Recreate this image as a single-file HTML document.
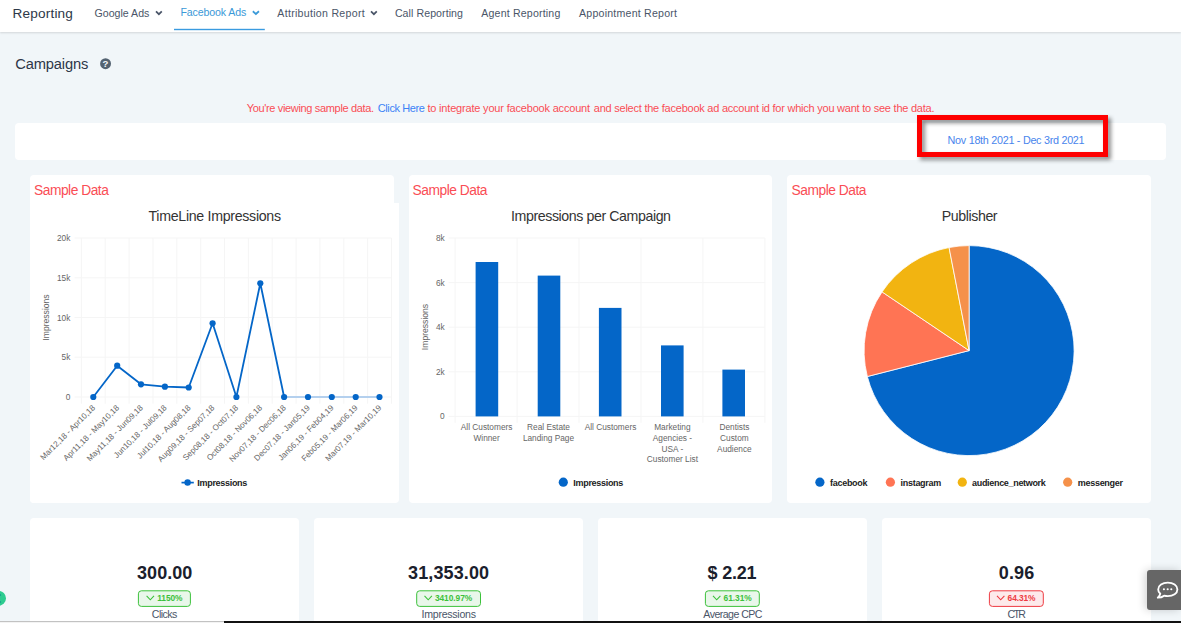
<!DOCTYPE html>
<html><head><meta charset="utf-8">
<style>
*{box-sizing:border-box;margin:0;padding:0}
html,body{width:1181px;height:623px;overflow:hidden;background:#f1f6f9;font-family:"Liberation Sans",sans-serif}
.abs{position:absolute}
#nav{position:absolute;left:0;top:0;width:1181px;height:32px;background:#fff;box-shadow:0 1px 2px rgba(0,0,0,.13)}
.card{position:absolute;background:#fff;border-radius:4px}
svg{position:absolute;left:0;top:0}
svg text{font-family:"Liberation Sans",sans-serif;white-space:pre}
</style></head><body>
<div id="nav"></div>
<div class="card" style="left:15px;top:123px;width:1151px;height:37px;border-radius:4px"></div>
<div class="abs" style="left:917px;top:115px;width:191px;height:42px;border:5px solid #fe0000;filter:drop-shadow(3px 3px 2px rgba(0,0,0,.45))"></div>
<div class="card" style="left:30px;top:175px;width:364px;height:328px"></div>
<div class="card" style="left:30px;top:203px;width:369px;height:300px;border-radius:0 0 4px 4px"></div>
<div class="card" style="left:409px;top:175px;width:363px;height:328px"></div>
<div class="card" style="left:787px;top:175px;width:364px;height:328px"></div>
<div class="card" style="left:30px;top:518px;width:269px;height:105px;border-radius:4px 4px 0 0"></div>
<div class="card" style="left:314px;top:518px;width:269px;height:105px;border-radius:4px 4px 0 0"></div>
<div class="card" style="left:598px;top:518px;width:269px;height:105px;border-radius:4px 4px 0 0"></div>
<div class="card" style="left:882px;top:518px;width:269px;height:105px;border-radius:4px 4px 0 0"></div>
<div class="abs" style="left:1147px;top:570px;width:34px;height:40px;border-radius:3px 0 0 3px;background:#666;box-shadow:-2px 0 8px rgba(0,0,0,.18)"></div>
<svg width="1181" height="623" viewBox="0 0 1181 623">
<text x="12.5" y="18.0" font-size="13.6" fill="#2d3748" textLength="60.4" lengthAdjust="spacing">Reporting</text>
<text x="94.5" y="16.7" font-size="10.6" fill="#4a5568" textLength="54.9" lengthAdjust="spacing">Google Ads</text>
<text x="180.5" y="15.8" font-size="10.6" fill="#3a99d8" textLength="65.7" lengthAdjust="spacing">Facebook Ads</text>
<text x="277.3" y="16.7" font-size="10.6" fill="#4a5568" textLength="87.4" lengthAdjust="spacing">Attribution Report</text>
<text x="394.9" y="16.7" font-size="10.6" fill="#4a5568" textLength="68.1" lengthAdjust="spacing">Call Reporting</text>
<text x="481.3" y="16.7" font-size="10.6" fill="#4a5568" textLength="79.0" lengthAdjust="spacing">Agent Reporting</text>
<text x="579.0" y="16.7" font-size="10.6" fill="#4a5568" textLength="98.0" lengthAdjust="spacing">Appointment Report</text>
<path d="M156.0,11.3 l2.9,2.9 l2.9,-2.9" fill="none" stroke="#4a5568" stroke-width="1.7"/>
<path d="M252.85,11.25 l3.05,2.75 l3.05,-2.75" fill="none" stroke="#3a99d8" stroke-width="1.7"/>
<path d="M371.0,11.3 l2.9,2.9 l2.9,-2.9" fill="none" stroke="#4a5568" stroke-width="1.7"/>
<rect x="174" y="28.8" width="90.8" height="1.4" fill="#3a9be0"/>
<text x="15.2" y="69.2" font-size="14.7" fill="#2d3748" textLength="73.2" lengthAdjust="spacing">Campaigns</text>
<circle cx="105.55" cy="63.7" r="5.45" fill="#536271"/>
<text x="105.55" y="67.2" text-anchor="middle" font-size="9.6" font-weight="bold" fill="#f1f6f9">?</text>
<text x="246.7" y="112.1" font-size="11" fill="#fa4d55" textLength="127.4" lengthAdjust="spacing">You're viewing sample data.</text>
<text x="377.8" y="112.1" font-size="11" fill="#3b82f6" textLength="47.0" lengthAdjust="spacing">Click Here</text>
<text x="427.4" y="112.1" font-size="11" fill="#fa4d55" textLength="162.7" lengthAdjust="spacing">to integrate your facebook account</text>
<text x="593.8" y="112.1" font-size="11" fill="#fa4d55" textLength="340.7" lengthAdjust="spacing">and select the facebook ad account id for which you want to see the data.</text>
<text x="947.6" y="143.8" font-size="10.8" fill="#4885ed" textLength="137.0" lengthAdjust="spacing">Nov 18th 2021 - Dec 3rd 2021</text>
<text x="34.0" y="195.0" font-size="13.8" fill="#fa4d55" textLength="74.9" lengthAdjust="spacing">Sample Data</text>
<text x="412.6" y="195.0" font-size="13.8" fill="#fa4d55" textLength="74.9" lengthAdjust="spacing">Sample Data</text>
<text x="791.5" y="195.0" font-size="13.8" fill="#fa4d55" textLength="75.0" lengthAdjust="spacing">Sample Data</text>
<text x="148.5" y="221.0" font-size="14.2" fill="#333" textLength="132.5" lengthAdjust="spacing">TimeLine Impressions</text>
<text x="511.0" y="221.0" font-size="14.2" fill="#333" textLength="160.0" lengthAdjust="spacing">Impressions per Campaign</text>
<text x="941.8" y="221.0" font-size="14.2" fill="#333" textLength="55.8" lengthAdjust="spacing">Publisher</text>
<line x1="74.5" y1="238.0" x2="391.5" y2="238.0" stroke="#f5f5f5" stroke-width="1"/>
<line x1="74.5" y1="277.8" x2="391.5" y2="277.8" stroke="#f5f5f5" stroke-width="1"/>
<line x1="74.5" y1="317.5" x2="391.5" y2="317.5" stroke="#f5f5f5" stroke-width="1"/>
<line x1="74.5" y1="357.2" x2="391.5" y2="357.2" stroke="#f5f5f5" stroke-width="1"/>
<line x1="74.5" y1="397.0" x2="391.5" y2="397.0" stroke="#f5f5f5" stroke-width="1"/>
<line x1="81.4" y1="238.0" x2="81.4" y2="403.7" stroke="#f5f5f5" stroke-width="1"/>
<line x1="105.2" y1="238.0" x2="105.2" y2="403.7" stroke="#f5f5f5" stroke-width="1"/>
<line x1="129.1" y1="238.0" x2="129.1" y2="403.7" stroke="#f5f5f5" stroke-width="1"/>
<line x1="153.0" y1="238.0" x2="153.0" y2="403.7" stroke="#f5f5f5" stroke-width="1"/>
<line x1="176.8" y1="238.0" x2="176.8" y2="403.7" stroke="#f5f5f5" stroke-width="1"/>
<line x1="200.7" y1="238.0" x2="200.7" y2="403.7" stroke="#f5f5f5" stroke-width="1"/>
<line x1="224.5" y1="238.0" x2="224.5" y2="403.7" stroke="#f5f5f5" stroke-width="1"/>
<line x1="248.4" y1="238.0" x2="248.4" y2="403.7" stroke="#f5f5f5" stroke-width="1"/>
<line x1="272.2" y1="238.0" x2="272.2" y2="403.7" stroke="#f5f5f5" stroke-width="1"/>
<line x1="296.1" y1="238.0" x2="296.1" y2="403.7" stroke="#f5f5f5" stroke-width="1"/>
<line x1="319.9" y1="238.0" x2="319.9" y2="403.7" stroke="#f5f5f5" stroke-width="1"/>
<line x1="343.8" y1="238.0" x2="343.8" y2="403.7" stroke="#f5f5f5" stroke-width="1"/>
<line x1="367.6" y1="238.0" x2="367.6" y2="403.7" stroke="#f5f5f5" stroke-width="1"/>
<line x1="391.5" y1="238.0" x2="391.5" y2="403.7" stroke="#f5f5f5" stroke-width="1"/>
<text x="70.3" y="241.0" text-anchor="end" font-size="8.3" fill="#666">20k</text>
<text x="70.3" y="280.8" text-anchor="end" font-size="8.3" fill="#666">15k</text>
<text x="70.3" y="320.5" text-anchor="end" font-size="8.3" fill="#666">10k</text>
<text x="70.3" y="360.2" text-anchor="end" font-size="8.3" fill="#666">5k</text>
<text x="70.3" y="400.0" text-anchor="end" font-size="8.3" fill="#666">0</text>
<text transform="translate(49.3,317.5) rotate(-90)" text-anchor="middle" font-size="8.6" fill="#666">Impressions</text>
<path d="M93.3,397.0 L117.2,365.7 L141.0,384.3 L164.9,386.7 L188.7,387.5 L212.6,323.3 L236.4,397.0 L260.3,283.3 L284.1,397.0" fill="none" stroke="#0466c8" stroke-width="1.8" stroke-linejoin="round"/>
<path d="M284.1,397.0 L308.0,397.0 L331.8,397.0 L355.7,397.0 L379.5,397.0" fill="none" stroke="#b4d0ee" stroke-width="1.8"/>
<circle cx="93.3" cy="397.0" r="3.1" fill="#0466c8"/>
<circle cx="117.2" cy="365.7" r="3.1" fill="#0466c8"/>
<circle cx="141.0" cy="384.3" r="3.1" fill="#0466c8"/>
<circle cx="164.9" cy="386.7" r="3.1" fill="#0466c8"/>
<circle cx="188.7" cy="387.5" r="3.1" fill="#0466c8"/>
<circle cx="212.6" cy="323.3" r="3.1" fill="#0466c8"/>
<circle cx="236.4" cy="397.0" r="3.1" fill="#0466c8"/>
<circle cx="260.3" cy="283.3" r="3.1" fill="#0466c8"/>
<circle cx="284.1" cy="397.0" r="3.1" fill="#0466c8"/>
<circle cx="308.0" cy="397.0" r="3.1" fill="#0466c8"/>
<circle cx="331.8" cy="397.0" r="3.1" fill="#0466c8"/>
<circle cx="355.7" cy="397.0" r="3.1" fill="#0466c8"/>
<circle cx="379.5" cy="397.0" r="3.1" fill="#0466c8"/>
<text transform="translate(95.7,408.3) rotate(-45)" text-anchor="end" font-size="8.1" fill="#666">Mar12,18 - Apr10,18</text>
<text transform="translate(119.6,408.3) rotate(-45)" text-anchor="end" font-size="8.1" fill="#666">Apr11,18 - May10,18</text>
<text transform="translate(143.4,408.3) rotate(-45)" text-anchor="end" font-size="8.1" fill="#666">May11,18 - Jun09,18</text>
<text transform="translate(167.3,408.3) rotate(-45)" text-anchor="end" font-size="8.1" fill="#666">Jun10,18 - Jul09,18</text>
<text transform="translate(191.1,408.3) rotate(-45)" text-anchor="end" font-size="8.1" fill="#666">Jul10,18 - Aug08,18</text>
<text transform="translate(215.0,408.3) rotate(-45)" text-anchor="end" font-size="8.1" fill="#666">Aug09,18 - Sep07,18</text>
<text transform="translate(238.8,408.3) rotate(-45)" text-anchor="end" font-size="8.1" fill="#666">Sep08,18 - Oct07,18</text>
<text transform="translate(262.7,408.3) rotate(-45)" text-anchor="end" font-size="8.1" fill="#666">Oct08,18 - Nov06,18</text>
<text transform="translate(286.5,408.3) rotate(-45)" text-anchor="end" font-size="8.1" fill="#666">Nov07,18 - Dec06,18</text>
<text transform="translate(310.4,408.3) rotate(-45)" text-anchor="end" font-size="8.1" fill="#666">Dec07,18 - Jan05,19</text>
<text transform="translate(334.2,408.3) rotate(-45)" text-anchor="end" font-size="8.1" fill="#666">Jan06,19 - Feb04,19</text>
<text transform="translate(358.1,408.3) rotate(-45)" text-anchor="end" font-size="8.1" fill="#666">Feb05,19 - Mar06,19</text>
<text transform="translate(381.9,408.3) rotate(-45)" text-anchor="end" font-size="8.1" fill="#666">Mar07,19 - Mar10,19</text>
<line x1="181.5" y1="482.6" x2="193.8" y2="482.6" stroke="#0466c8" stroke-width="1.7"/><circle cx="187.6" cy="482.6" r="3.25" fill="#0466c8"/>
<text x="197.3" y="485.8" font-size="9" fill="#222" font-weight="bold" textLength="50.0" lengthAdjust="spacing">Impressions</text>
<line x1="448.5" y1="238.0" x2="764.9" y2="238.0" stroke="#f5f5f5" stroke-width="1"/>
<line x1="448.5" y1="282.6" x2="764.9" y2="282.6" stroke="#f5f5f5" stroke-width="1"/>
<line x1="448.5" y1="327.2" x2="764.9" y2="327.2" stroke="#f5f5f5" stroke-width="1"/>
<line x1="448.5" y1="371.8" x2="764.9" y2="371.8" stroke="#f5f5f5" stroke-width="1"/>
<line x1="448.5" y1="416.4" x2="764.9" y2="416.4" stroke="#f5f5f5" stroke-width="1"/>
<line x1="455.1" y1="238.0" x2="455.1" y2="422.8" stroke="#f5f5f5" stroke-width="1"/>
<line x1="517.1" y1="238.0" x2="517.1" y2="422.8" stroke="#f5f5f5" stroke-width="1"/>
<line x1="579.0" y1="238.0" x2="579.0" y2="422.8" stroke="#f5f5f5" stroke-width="1"/>
<line x1="641.0" y1="238.0" x2="641.0" y2="422.8" stroke="#f5f5f5" stroke-width="1"/>
<line x1="702.9" y1="238.0" x2="702.9" y2="422.8" stroke="#f5f5f5" stroke-width="1"/>
<line x1="764.9" y1="238.0" x2="764.9" y2="422.8" stroke="#f5f5f5" stroke-width="1"/>
<text x="444.7" y="241.0" text-anchor="end" font-size="8.3" fill="#666">8k</text>
<text x="444.7" y="285.6" text-anchor="end" font-size="8.3" fill="#666">6k</text>
<text x="444.7" y="330.2" text-anchor="end" font-size="8.3" fill="#666">4k</text>
<text x="444.7" y="374.8" text-anchor="end" font-size="8.3" fill="#666">2k</text>
<text x="444.7" y="419.4" text-anchor="end" font-size="8.3" fill="#666">0</text>
<text transform="translate(427.6,327) rotate(-90)" text-anchor="middle" font-size="8.6" fill="#666">Impressions</text>
<rect x="475.6" y="262.0" width="22.6" height="154.4" fill="#0466c8"/>
<rect x="537.7" y="275.6" width="22.6" height="140.8" fill="#0466c8"/>
<rect x="598.9" y="307.9" width="22.6" height="108.5" fill="#0466c8"/>
<rect x="661.0" y="345.4" width="22.6" height="71.0" fill="#0466c8"/>
<rect x="722.4" y="369.6" width="22.6" height="46.8" fill="#0466c8"/>
<text x="486.6" y="430.4" text-anchor="middle" font-size="8.3" fill="#666">All Customers</text>
<text x="486.6" y="441.0" text-anchor="middle" font-size="8.3" fill="#666">Winner</text>
<text x="548.5" y="430.4" text-anchor="middle" font-size="8.3" fill="#666">Real Estate</text>
<text x="548.5" y="441.0" text-anchor="middle" font-size="8.3" fill="#666">Landing Page</text>
<text x="610.5" y="430.4" text-anchor="middle" font-size="8.3" fill="#666">All Customers</text>
<text x="672.4" y="430.4" text-anchor="middle" font-size="8.3" fill="#666">Marketing</text>
<text x="672.4" y="441.0" text-anchor="middle" font-size="8.3" fill="#666">Agencies -</text>
<text x="672.4" y="451.7" text-anchor="middle" font-size="8.3" fill="#666">USA -</text>
<text x="672.4" y="462.3" text-anchor="middle" font-size="8.3" fill="#666">Customer List</text>
<text x="734.4" y="430.4" text-anchor="middle" font-size="8.3" fill="#666">Dentists</text>
<text x="734.4" y="441.0" text-anchor="middle" font-size="8.3" fill="#666">Custom</text>
<text x="734.4" y="451.7" text-anchor="middle" font-size="8.3" fill="#666">Audience</text>
<circle cx="563.3" cy="482.2" r="4.6" fill="#0466c8"/>
<text x="573.3" y="485.8" font-size="9" fill="#222" font-weight="bold" textLength="50.0" lengthAdjust="spacing">Impressions</text>
<path d="M969.1,350.6 L969.10,245.60 A105.0,105.0 0 1 1 867.35,376.53 Z" fill="#0466c8" stroke="#fff" stroke-width="0.8" stroke-linejoin="round"/>
<path d="M969.1,350.6 L867.35,376.53 A105.0,105.0 0 0 1 882.05,291.88 Z" fill="#ff7454" stroke="#fff" stroke-width="0.8" stroke-linejoin="round"/>
<path d="M969.1,350.6 L882.05,291.88 A105.0,105.0 0 0 1 949.07,247.53 Z" fill="#f2b411" stroke="#fff" stroke-width="0.8" stroke-linejoin="round"/>
<path d="M969.1,350.6 L949.07,247.53 A105.0,105.0 0 0 1 969.10,245.60 Z" fill="#f5914a" stroke="#fff" stroke-width="0.8" stroke-linejoin="round"/>
<circle cx="819.9" cy="482.2" r="4.6" fill="#0466c8"/>
<text x="829.9" y="485.8" font-size="9" fill="#222" font-weight="bold" textLength="37.7" lengthAdjust="spacing">facebook</text>
<circle cx="890.4" cy="482.2" r="4.6" fill="#ff7454"/>
<text x="900.5" y="485.8" font-size="9" fill="#222" font-weight="bold" textLength="40.8" lengthAdjust="spacing">instagram</text>
<circle cx="962.3" cy="482.2" r="4.6" fill="#f2b411"/>
<text x="972.1" y="485.8" font-size="9" fill="#222" font-weight="bold" textLength="73.7" lengthAdjust="spacing">audience_network</text>
<circle cx="1067.7" cy="482.2" r="4.6" fill="#f5914a"/>
<text x="1077.8" y="485.8" font-size="9" fill="#222" font-weight="bold" textLength="45.2" lengthAdjust="spacing">messenger</text>
<text x="137.1" y="578.8" font-size="18" fill="#1a202c" font-weight="bold" textLength="55.1" lengthAdjust="spacing">300.00</text>
<text x="408.1" y="578.8" font-size="18" fill="#1a202c" font-weight="bold" textLength="81.0" lengthAdjust="spacing">31,353.00</text>
<text x="707.6" y="578.8" font-size="18" fill="#1a202c" font-weight="bold" textLength="48.9" lengthAdjust="spacing">$ 2.21</text>
<text x="998.7" y="578.8" font-size="18" fill="#1a202c" font-weight="bold" textLength="35.6" lengthAdjust="spacing">0.96</text>
<rect x="138.4" y="590.8" width="52.0" height="15.6" rx="3" fill="#e9f7ea" stroke="#3cc13b" stroke-width="1"/>
<path d="M146.6,595.9 l3.7,3.9 l3.7,-3.9" fill="none" stroke="#3cc13b" stroke-width="1.1"/>
<text x="157.3" y="601.3" font-size="8.4" fill="#3cc13b" font-weight="bold" textLength="25.1" lengthAdjust="spacing">1150%</text>
<rect x="416.7" y="590.8" width="63.8" height="15.6" rx="3" fill="#e9f7ea" stroke="#3cc13b" stroke-width="1"/>
<path d="M424.5,595.9 l3.7,3.9 l3.7,-3.9" fill="none" stroke="#3cc13b" stroke-width="1.1"/>
<text x="434.9" y="601.3" font-size="8.4" fill="#3cc13b" font-weight="bold" textLength="37.3" lengthAdjust="spacing">3410.97%</text>
<rect x="705.4" y="590.8" width="53.9" height="15.6" rx="3" fill="#e9f7ea" stroke="#3cc13b" stroke-width="1"/>
<path d="M713.0,595.9 l3.7,3.9 l3.7,-3.9" fill="none" stroke="#3cc13b" stroke-width="1.1"/>
<text x="723.6" y="601.3" font-size="8.4" fill="#3cc13b" font-weight="bold" textLength="28.1" lengthAdjust="spacing">61.31%</text>
<rect x="989.4" y="590.8" width="53.9" height="15.6" rx="3" fill="#fdeaeb" stroke="#ee3b42" stroke-width="1"/>
<path d="M997.0,595.9 l3.7,3.9 l3.7,-3.9" fill="none" stroke="#ee3b42" stroke-width="1.1"/>
<text x="1007.6" y="601.3" font-size="8.4" fill="#ee3b42" font-weight="bold" textLength="27.9" lengthAdjust="spacing">64.31%</text>
<text x="151.8" y="617.8" font-size="10.6" fill="#4a5568" textLength="25.6" lengthAdjust="spacing">Clicks</text>
<text x="421.5" y="617.8" font-size="10.6" fill="#4a5568" textLength="54.5" lengthAdjust="spacing">Impressions</text>
<text x="703.3" y="617.8" font-size="10.6" fill="#4a5568" textLength="59.2" lengthAdjust="spacing">Average CPC</text>
<text x="1007.6" y="617.8" font-size="10.6" fill="#4a5568" textLength="18.4" lengthAdjust="spacing">CTR</text>
<circle cx="-1.5" cy="598.3" r="7.5" fill="#2ecc90"/>
<circle cx="0.2" cy="595" r="0.9" fill="#18a08f"/><circle cx="0.2" cy="602" r="0.9" fill="#18a08f"/>
<path d="M1167.8,582.6 c5.4,0 9.6,3.0 9.6,6.8 c0,3.8 -4.2,6.8 -9.6,6.8 c-1.3,0 -2.6,-0.2 -3.7,-0.5 c-1.6,1.3 -3.9,2.0 -6.3,2.0 c1.3,-1.2 2.2,-2.6 2.5,-3.9 c-1.3,-1.2 -2.1,-2.7 -2.1,-4.4 c0,-3.8 4.2,-6.8 9.6,-6.8 z" fill="none" stroke="#fff" stroke-width="1.85" stroke-linejoin="round"/>
<circle cx="1163.9" cy="589.2" r="1.05" fill="#fff"/>
<circle cx="1167.7" cy="589.2" r="1.05" fill="#fff"/>
<circle cx="1171.3" cy="589.2" r="1.05" fill="#fff"/>
</svg>
<div class="abs" style="left:0;top:621px;width:224px;height:1px;background:#c2c2c2"></div>
<div class="abs" style="left:0;top:622px;width:224px;height:1px;background:#f3f3f3"></div>
<div class="abs" style="left:224px;top:621px;width:957px;height:2px;background:#111"></div>
</body></html>
